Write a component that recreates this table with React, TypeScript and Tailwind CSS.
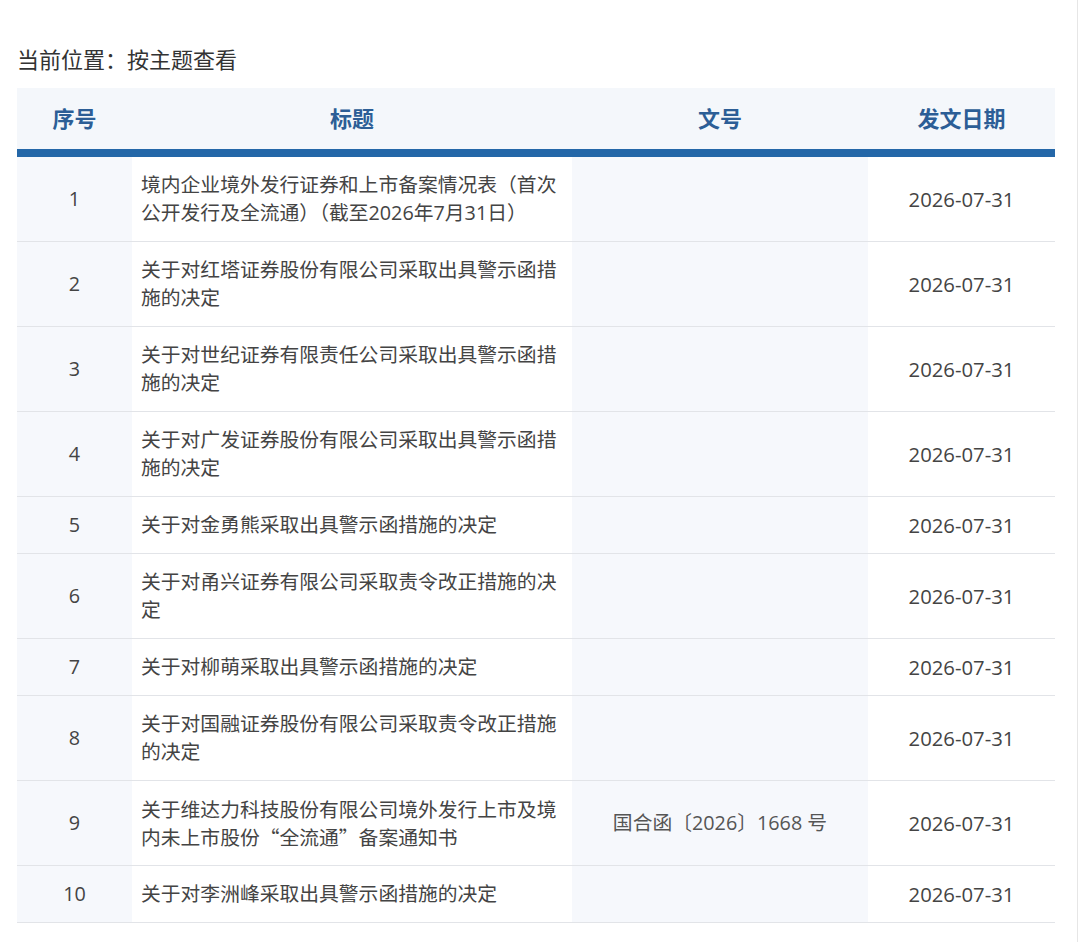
import React from "react";

const rows: { id: number; title: string; no: string; date: string; cjk?: boolean }[] = [
  { id: 1, title: "境内企业境外发行证券和上市备案情况表（首次公开发行及全流通）（截至2026年7月31日）", no: "", date: "2026-07-31" },
  { id: 2, title: "关于对红塔证券股份有限公司采取出具警示函措施的决定", no: "", date: "2026-07-31" },
  { id: 3, title: "关于对世纪证券有限责任公司采取出具警示函措施的决定", no: "", date: "2026-07-31" },
  { id: 4, title: "关于对广发证券股份有限公司采取出具警示函措施的决定", no: "", date: "2026-07-31" },
  { id: 5, title: "关于对金勇熊采取出具警示函措施的决定", no: "", date: "2026-07-31" },
  { id: 6, title: "关于对甬兴证券有限公司采取责令改正措施的决定", no: "", date: "2026-07-31" },
  { id: 7, title: "关于对柳萌采取出具警示函措施的决定", no: "", date: "2026-07-31" },
  { id: 8, title: "关于对国融证券股份有限公司采取责令改正措施的决定", no: "", date: "2026-07-31" },
  {
    id: 9,
    title: "关于维达力科技股份有限公司境外发行上市及境内未上市股份“全流通”备案通知书",
    no: "国合函〔2026〕1668 号",
    date: "2026-07-31",
    cjk: true,
  },
  { id: 10, title: "关于对李洲峰采取出具警示函措施的决定", no: "", date: "2026-07-31" },
];

const font = { fontFamily: '"Open Sans", "Noto Sans CJK SC", sans-serif' };
const cjkFont = { fontFamily: '"Noto Sans CJK SC", sans-serif' };

export default function App() {
  return (
    <div className="min-h-[942px] w-[1078px] border-r border-[#e6e6e6] bg-white" style={font}>
      <div className="pl-[17px] pt-[44px]">
        <div className="text-[22px] leading-[30px] text-[#333]">当前位置：按主题查看</div>
        <div className="mt-[14px] w-[1038px]">
          <div className="grid grid-cols-[115px_440px_296px_187px] h-[61px] bg-[#f4f7fb] text-[22px] font-bold text-[#2c5e96]">
            <div className="flex items-center justify-center">序号</div>
            <div className="flex items-center justify-center">标题</div>
            <div className="flex items-center justify-center">文号</div>
            <div className="flex items-center justify-center">发文日期</div>
          </div>
          <div className="h-[8px] bg-[#2467a8]" />
          {rows.map((r) => (
            <div
              key={r.id}
              className="grid grid-cols-[115px_440px_296px_187px] border-b border-[#e2e4e8] text-[19.8px] leading-[28px] text-[#444]"
            >
              <div className="flex items-center justify-center bg-[#f6f8fc] py-[14px]">{r.id}</div>
              <div className="flex items-center bg-white px-[9px] py-[14px]">
                <div style={r.cjk ? cjkFont : undefined}>{r.title}</div>
              </div>
              <div className="flex items-center justify-center bg-[#f6f8fc] py-[14px] text-[#555]">{r.no}</div>
              <div className="flex items-center justify-center bg-white py-[14px] text-[20.3px]">{r.date}</div>
            </div>
          ))}
        </div>
      </div>
    </div>
  );
}
